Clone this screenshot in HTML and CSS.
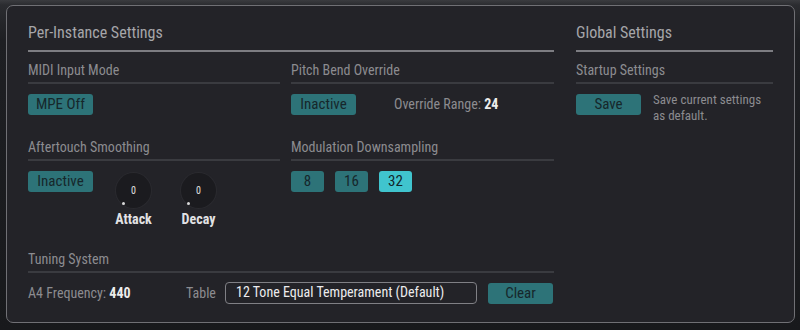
FILE: index.html
```html
<!DOCTYPE html>
<html lang="en">
<head>
	<meta charset="UTF-8">
	<title>Settings</title>
	<link rel="stylesheet" href="styles.css">
</head>
<body>
	<div class="dialog">
		<div class="col-left">
			<h1 class="title">Per-Instance Settings</h1>
			<div class="grid2">
				<div class="group">
					<h2 class="sub">MIDI Input Mode</h2>
					<div class="row">
						<span class="btn">MPE Off</span>
					</div>
				</div>
				<div class="group">
					<h2 class="sub">Pitch Bend Override</h2>
					<div class="row">
						<span class="btn">Inactive</span>
						<span class="label range">Override Range: <b>24</b></span>
					</div>
				</div>
				<div class="group">
					<h2 class="sub">Aftertouch Smoothing</h2>
					<div class="row">
						<span class="btn">Inactive</span>
						<div class="knobs">
							<div class="knob-wrap">
								<div class="knob"><span>0</span><i class="dot"></i></div>
								<div class="knob-label">Attack</div>
							</div>
							<div class="knob-wrap">
								<div class="knob"><span>0</span><i class="dot"></i></div>
								<div class="knob-label">Decay</div>
							</div>
						</div>
					</div>
				</div>
				<div class="group">
					<h2 class="sub">Modulation Downsampling</h2>
					<div class="row small-gap">
						<span class="btn sq">8</span>
						<span class="btn sq">16</span>
						<span class="btn sq on">32</span>
					</div>
				</div>
			</div>
			<div class="group tuning">
				<h2 class="sub">Tuning System</h2>
				<div class="row tune-row">
					<span class="label freq">A4 Frequency: <b>440</b></span>
					<span class="label table">Table</span>
					<span class="input">12 Tone Equal Temperament (Default)</span>
					<span class="btn">Clear</span>
				</div>
			</div>
		</div>
		<div class="col-right">
			<h1 class="title">Global Settings</h1>
			<div class="group">
				<h2 class="sub">Startup Settings</h2>
				<div class="row">
					<span class="btn">Save</span>
					<span class="label desc">Save current settings<br>as default.</span>
				</div>
			</div>
		</div>
	</div>
</body>
</html>
```

FILE: styles.css
```css
*{
	margin: 0;
	padding: 0;
	box-sizing: border-box;
}
html,body{
	height: 100%;
}
body{
	background: linear-gradient(#3a3b3f 0, #2b2c30 5px, #1e1f23 40px, #18191c 100%);
	font-family: "Roboto Condensed", Roboto, "Liberation Sans", sans-serif;
	font-stretch: condensed;
	padding: 5px 5px 7px 6px;
}
.dialog{
	width: 789px;
	height: 318px;
	background: #232328;
	border: 1.5px solid #707075;
	border-radius: 7px;
	display: flex;
	gap: 22px;
	padding: 16px 21px 0 21px;
}
.col-left{
	width: 526px;
}
.col-right{
	width: 197px;
}
.title{
	font-size: 16px;
	line-height: 20px;
	font-weight: 400;
	color: #a6a6aa;
	padding-top: 1px;
	padding-bottom: 7px;
	border-bottom: 2px solid #7d7d82;
}
.grid2{
	display: grid;
	grid-template-columns: 252px 263px;
	column-gap: 11px;
}
.sub{
	font-size: 14px;
	line-height: 18px;
	font-weight: 400;
	color: #8c8c90;
	margin-top: 9px;
	padding-bottom: 3px;
	border-bottom: 2px solid #3a3b40;
}
.grid2 .group:nth-child(3) .sub,
.grid2 .group:nth-child(4) .sub{
	margin-top: 23px;
}
.row{
	display: flex;
	align-items: flex-start;
	margin-top: 10px;
	gap: 11px;
}
.btn{
	display: inline-block;
	width: 65px;
	height: 21px;
	line-height: 21px;
	text-align: center;
	background: #2d7378;
	color: #16272b;
	font-size: 15px;
	font-weight: 400;
	border-radius: 3px;
}
.btn.sq{
	width: 33px;
}
.btn.on{
	background: #40c4ce;
	color: #12262a;
}
.label{
	font-size: 14px;
	font-weight: 400;
	color: #8c8c90;
	line-height: 21px;
}
.label b{
	color: #ececec;
	font-weight: 700;
}
.range{
	margin-left: 27px;
}
.desc{
	font-size: 13px;
	line-height: 16px;
	margin-top: -2px;
	margin-left: 1px;
}
.knobs{
	display: flex;
	gap: 30px;
	margin-left: 12px;
}
.knob-wrap{
	width: 35px;
	display: flex;
	flex-direction: column;
	align-items: center;
}
.knob{
	position: relative;
	width: 35px;
	height: 35px;
	margin-top: 2px;
	border-radius: 50%;
	background: #1b1b1f;
	box-shadow: 0 0 0 1px #2a2a2f;
	color: #e0e0e0;
	font-size: 10px;
	display: flex;
	align-items: center;
	justify-content: center;
}
.dot{
	position: absolute;
	left: 6px;
	top: 29px;
	width: 3px;
	height: 3px;
	border-radius: 50%;
	background: #d8d8d8;
}
.knob-label{
	font-size: 14px;
	font-weight: 700;
	color: #e2e2e4;
	line-height: 18px;
	margin-top: 2px;
	white-space: nowrap;
}
.tuning .sub{
	margin-top: 22px;
}
.tune-row{
	gap: 0;
}
.freq{
	width: 158px;
}
.table{
	width: 39px;
}
.input{
	width: 252px;
	height: 22px;
	border: 1.5px solid #808085;
	border-radius: 4px;
	color: #ececee;
	font-size: 14px;
	font-weight: 400;
	line-height: 19px;
	padding-left: 10px;
	margin-top: -1px;
}
.tune-row .btn{
	margin-left: 11px;
}
```
